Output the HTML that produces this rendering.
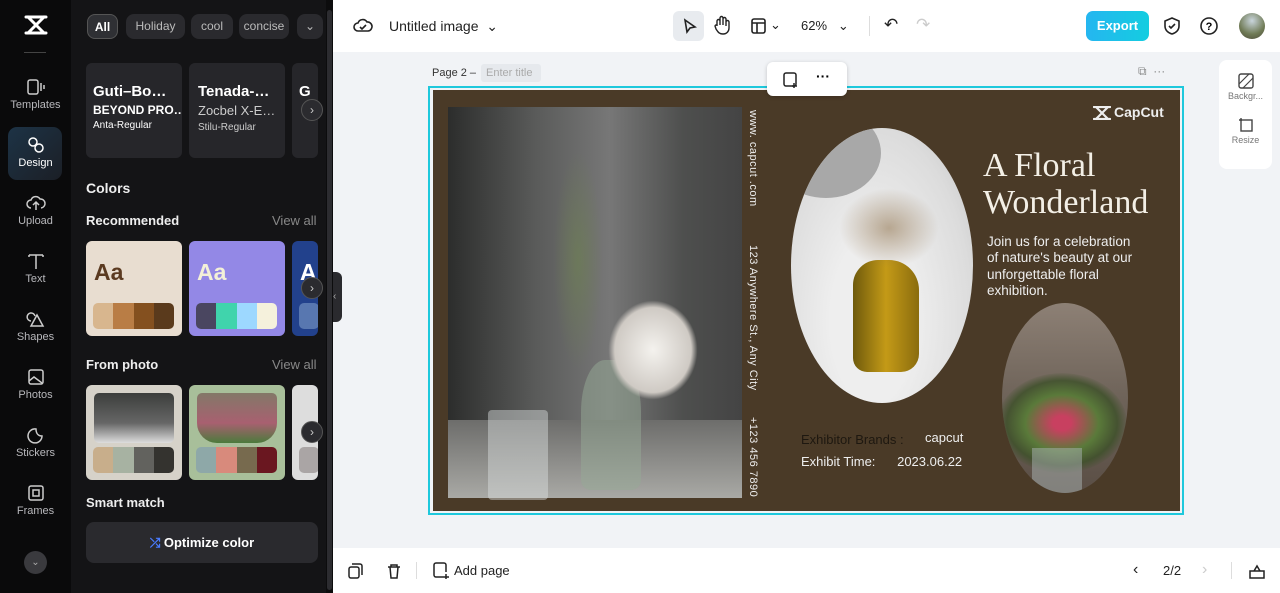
<!DOCTYPE html>
<html><head><style>
*{box-sizing:border-box;margin:0;padding:0}
body{width:1280px;height:593px;overflow:hidden;font-family:"Liberation Sans",sans-serif;background:#f1f3f6;position:relative}
.abs{position:absolute}
.rail{left:0;top:0;width:71px;height:593px;background:#0a0a0b}
.ri{position:absolute;left:0;width:71px;text-align:center;color:#b8b8bc;font-size:11px}
.ri svg{display:block;margin:0 auto 3px}
.panel{left:71px;top:0;width:262px;height:593px;background:#141416;color:#fff}
.chip{position:absolute;top:14px;height:25px;border-radius:8px;background:#2a2a2e;color:#bbb;font-size:12px;line-height:25px;text-align:center}
.card{position:absolute;border-radius:6px;overflow:hidden}
.sw{position:absolute;height:26px;border-radius:5px;overflow:hidden;display:flex}
.sw div{flex:1}
.h{position:absolute;font-size:13px;font-weight:bold;color:#eee}
.va{position:absolute;font-size:13px;color:#888}
.arrow{position:absolute;width:22px;height:22px;border-radius:50%;background:#2b2b2f;border:1px solid #555;color:#ccc;font-size:12px;line-height:20px;text-align:center}
.top{left:333px;top:0;width:947px;height:52px;background:#fff}
.bot{left:333px;top:548px;width:947px;height:45px;background:#fff}
.tx{position:absolute;font-size:13px;color:#222}
.vt{position:absolute;writing-mode:vertical-rl;color:#eee;font-size:11px;letter-spacing:.5px}
</style></head><body>
<div class="abs rail">
<svg class="abs" style="left:24px;top:15px" width="24" height="20"><path d="M2 2h20M2 18h20M4 2l16 16M20 2L4 18" fill="none" stroke="#fff" stroke-width="3" stroke-linejoin="round" stroke-linecap="round"/></svg>
<div style="position:absolute;left:24px;top:52px;width:22px;height:1px;background:#444"></div>
<div class="ri" style="top:78px"><svg width="20" height="18"><rect x="2" y="2" width="10" height="14" rx="2" fill="none" stroke="#ccc" stroke-width="1.5"/><path d="M15 5v8M18 7v4" stroke="#ccc" stroke-width="1.5"/></svg>Templates</div>
<div style="position:absolute;left:8px;top:127px;width:54px;height:53px;border-radius:9px;background:linear-gradient(135deg,#1d3346,#1b1f26)"></div>
<div class="ri" style="top:136px;color:#fff"><svg width="20" height="18"><circle cx="7" cy="6" r="4" fill="none" stroke="#fff" stroke-width="1.5"/><circle cx="13" cy="12" r="4" fill="none" stroke="#fff" stroke-width="1.5"/></svg>Design</div>
<div class="ri" style="top:194px"><svg width="20" height="18"><path d="M5 14a4 4 0 010-8 5 5 0 019-1 4 4 0 011 9M10 8v8M7 11l3-3 3 3" fill="none" stroke="#ccc" stroke-width="1.5"/></svg>Upload</div>
<div class="ri" style="top:252px"><svg width="20" height="18"><path d="M3 3h14M10 3v14M3 3v2M17 3v2" stroke="#ccc" stroke-width="1.5" fill="none"/></svg>Text</div>
<div class="ri" style="top:310px"><svg width="20" height="18"><path d="M9 6a4 4 0 10-4 5M11 5l6 11H5z" fill="none" stroke="#ccc" stroke-width="1.5"/></svg>Shapes</div>
<div class="ri" style="top:368px"><svg width="20" height="18"><rect x="3" y="2" width="14" height="14" rx="2" fill="none" stroke="#ccc" stroke-width="1.5"/><path d="M3 13l5-4 8 6" fill="none" stroke="#ccc" stroke-width="1.5"/></svg>Photos</div>
<div class="ri" style="top:426px"><svg width="20" height="18"><path d="M16 10a7 7 0 11-6-7c0 4 2 7 6 7z" fill="none" stroke="#ccc" stroke-width="1.5"/></svg>Stickers</div>
<div class="ri" style="top:484px"><svg width="20" height="18"><rect x="3" y="2" width="14" height="14" rx="2" fill="none" stroke="#ccc" stroke-width="1.5"/><rect x="7" y="6" width="6" height="6" fill="none" stroke="#ccc" stroke-width="1.5"/></svg>Frames</div>
<div style="position:absolute;left:24px;top:551px;width:23px;height:23px;border-radius:50%;background:#3a3a3e;color:#aaa;font-size:10px;text-align:center;line-height:23px">⌄</div>
</div>
<div class="abs panel">
<div class="chip" style="left:16px;width:31px;background:#2f3034;border:1px solid #555;color:#fff;font-weight:bold">All</div>
<div class="chip" style="left:55px;width:59px">Holiday</div>
<div class="chip" style="left:120px;width:42px">cool</div>
<div class="chip" style="left:168px;width:50px;overflow:hidden">concise</div>
<div class="chip" style="left:226px;width:26px">⌄</div>
<div class="card" style="left:15px;top:63px;width:96px;height:95px;background:#26262a;padding:20px 7px;font-size:15px;font-weight:bold;white-space:nowrap;overflow:hidden">Guti–Bo…<div style="font-size:12px;margin-top:3px">BEYOND PRO…</div><div style="font-size:10px;font-weight:normal;margin-top:3px">Anta-Regular</div></div>
<div class="card" style="left:118px;top:63px;width:96px;height:95px;background:#26262a;padding:20px 9px;font-size:15px;font-weight:bold;white-space:nowrap;overflow:hidden">Tenada-…<div style="font-size:13px;font-weight:normal;margin-top:3px;color:#ccc">Zocbel X-E…</div><div style="font-size:10px;font-weight:normal;margin-top:4px;color:#ccc">Stilu-Regular</div></div>
<div class="card" style="left:221px;top:63px;width:26px;height:95px;background:#26262a;padding:20px 7px;font-size:15px;font-weight:bold">G</div>
<div class="arrow" style="left:230px;top:99px">›</div>
<div class="h" style="left:15px;top:180px;font-size:14px">Colors</div>
<div class="h" style="left:15px;top:213px">Recommended</div><div class="va" style="left:201px;top:213px">View all</div>
<div class="card" style="left:15px;top:241px;width:96px;height:95px;background:#e8ddd0"><div style="position:absolute;left:8px;top:18px;font-size:23px;font-weight:bold;color:#5b3a20">Aa</div><div class="sw" style="left:7px;top:62px;width:81px"><div style="background:#d8b68e"></div><div style="background:#b97d45"></div><div style="background:#84501f"></div><div style="background:#5a3a1c"></div></div></div>
<div class="card" style="left:118px;top:241px;width:96px;height:95px;background:#9388e6"><div style="position:absolute;left:8px;top:18px;font-size:23px;font-weight:bold;color:#f3f0d8">Aa</div><div class="sw" style="left:7px;top:62px;width:81px"><div style="background:#4a4660"></div><div style="background:#40d4ac"></div><div style="background:#9dd8ff"></div><div style="background:#f5f1dc"></div></div></div>
<div class="card" style="left:221px;top:241px;width:26px;height:95px;background:#22418c"><div style="position:absolute;left:8px;top:18px;font-size:23px;font-weight:bold;color:#fff">A</div><div style="position:absolute;left:7px;top:62px;width:20px;height:26px;background:#5877b0;border-radius:5px"></div></div>
<div class="arrow" style="left:230px;top:277px">›</div>
<div class="h" style="left:15px;top:357px">From photo</div><div class="va" style="left:201px;top:357px">View all</div>
<div class="card" style="left:15px;top:385px;width:96px;height:95px;background:#d6d2c9"><div style="position:absolute;left:8px;top:8px;width:80px;height:50px;border-radius:5px;background:linear-gradient(#3c3e3c,#666 60%,#ddd)"></div><div class="sw" style="left:7px;top:62px;width:81px"><div style="background:#c8ae8b"></div><div style="background:#a7b2a2"></div><div style="background:#62625e"></div><div style="background:#34332f"></div></div></div>
<div class="card" style="left:118px;top:385px;width:96px;height:95px;background:#a8bf9a"><div style="position:absolute;left:8px;top:8px;width:80px;height:50px;border-radius:5px 5px 20px 20px;background:linear-gradient(#837868,#a86070 60%,#4c7a3c)"></div><div class="sw" style="left:7px;top:62px;width:81px"><div style="background:#8ea8a8"></div><div style="background:#d88a7c"></div><div style="background:#776a4e"></div><div style="background:#6a1720"></div></div></div>
<div class="card" style="left:221px;top:385px;width:26px;height:95px;background:#ddd"><div style="position:absolute;left:7px;top:62px;width:20px;height:26px;background:#aaa5a5;border-radius:5px"></div></div>
<div class="arrow" style="left:230px;top:421px">›</div>
<div class="h" style="left:15px;top:495px">Smart match</div>
<div style="position:absolute;left:15px;top:522px;width:232px;height:41px;border-radius:8px;background:#2a2a2e;text-align:center;line-height:41px;font-size:13px;font-weight:bold"><span style="color:#4a7cff">⤮</span> Optimize color</div>
<div style="position:absolute;left:255px;top:0;width:7px;height:593px;background:#0c0c0d"></div>
<div style="position:absolute;left:256px;top:10px;width:5px;height:580px;border-radius:3px;background:#2c2c30"></div>
</div>
<div class="abs" style="left:333px;top:272px;width:9px;height:50px;background:#2a2a2e;border-radius:0 6px 6px 0;color:#aaa;font-size:10px;line-height:50px">‹</div>
<div class="abs top">
<svg class="abs" style="left:20px;top:16px" width="20" height="20"><path d="M5 15a4 4 0 010-8 5 5 0 019-1 4 4 0 011 9z" fill="none" stroke="#222" stroke-width="1.6"/><path d="M7 11l2 2 4-4" fill="none" stroke="#222" stroke-width="1.6"/></svg>
<div class="tx" style="left:56px;top:18px;font-size:14px">Untitled image &nbsp;⌄</div>
<div class="abs" style="left:340px;top:11px;width:31px;height:30px;border-radius:6px;background:#e8ebef"></div>
<svg class="abs" style="left:347px;top:17px" width="18" height="18"><path d="M5 3l10 7-5 1-3 4z" fill="none" stroke="#222" stroke-width="1.6"/></svg>
<svg class="abs" style="left:380px;top:15px" width="18" height="20"><path d="M4 11V6a1.5 1.5 0 013 0v4V3a1.5 1.5 0 013 0v7V4a1.5 1.5 0 013 0v7V7a1.5 1.5 0 013 0v6c0 3-2 6-6 6s-5-2-7-5l-1-3a1.5 1.5 0 012-1z" fill="none" stroke="#222" stroke-width="1.4"/></svg>
<svg class="abs" style="left:417px;top:17px" width="18" height="18"><rect x="2" y="2" width="13" height="14" rx="2" fill="none" stroke="#222" stroke-width="1.6"/><path d="M2 6h13M7 6v10" stroke="#222" stroke-width="1.6"/></svg>
<div class="tx" style="left:437px;top:17px">⌄</div>
<div class="tx" style="left:468px;top:18px">62% &nbsp;&nbsp;⌄</div>
<div class="abs" style="left:536px;top:16px;width:1px;height:20px;background:#ddd"></div>
<div class="tx" style="left:551px;top:15px;font-size:17px">↶</div>
<div class="tx" style="left:583px;top:15px;font-size:17px;color:#ccc">↷</div>
<div class="abs" style="left:753px;top:11px;width:63px;height:30px;border-radius:7px;background:linear-gradient(90deg,#25b6f0,#14cde0);color:#fff;font-weight:bold;font-size:13px;text-align:center;line-height:30px">Export</div>
<svg class="abs" style="left:829px;top:16px" width="20" height="20"><path d="M10 2l7 3v5c0 4-3 7-7 8-4-1-7-4-7-8V5z" fill="none" stroke="#222" stroke-width="1.6"/><path d="M7 10l2 2 4-4" fill="none" stroke="#222" stroke-width="1.6"/></svg>
<svg class="abs" style="left:866px;top:16px" width="20" height="20"><circle cx="10" cy="10" r="8" fill="none" stroke="#222" stroke-width="1.6"/><text x="10" y="14" font-size="11" text-anchor="middle" font-family="Liberation Sans" font-weight="bold">?</text></svg>
<div class="abs" style="left:906px;top:13px;width:26px;height:26px;border-radius:50%;background:radial-gradient(circle at 50% 30%,#c9d5dc,#6f7a55 60%,#4d4a3a)"></div>
</div>
<div class="tx" style="left:432px;top:67px;font-size:11px;color:#333">Page 2 –</div>
<div class="abs" style="left:481px;top:64px;width:60px;height:18px;border-radius:3px;background:#e6e9ed;color:#aaa;font-size:11px;line-height:18px;padding-left:5px">Enter title</div>
<div class="tx" style="left:1138px;top:64px;font-size:12px;color:#888">⧉ &nbsp;···</div>
<div class="abs" style="left:1219px;top:60px;width:53px;height:109px;border-radius:8px;background:#fff;color:#777;font-size:9px;text-align:center">
<svg style="display:block;margin:13px auto 2px" width="16" height="16"><rect x="1" y="1" width="14" height="14" rx="2" fill="none" stroke="#444" stroke-width="1.4"/><path d="M1 11L11 1M5 15L15 5" stroke="#444" stroke-width="1.2"/></svg>Backgr...
<svg style="display:block;margin:16px auto 2px" width="16" height="16"><rect x="3" y="3" width="11" height="11" fill="none" stroke="#444" stroke-width="1.4"/><path d="M1 3h3M3 1v3" stroke="#444" stroke-width="1.4"/></svg>Resize</div>
<!-- canvas -->
<div class="abs" style="left:428px;top:86px;width:756px;height:429px;border:2px solid #1ec8dc"></div>
<div class="abs" style="left:433px;top:90px;width:747px;height:421px;background:#4a3a27;overflow:hidden">
<div class="abs" style="left:15px;top:17px;width:294px;height:391px;background:linear-gradient(90deg,#2c2d2c,#5a5b5a 30%,#777 55%,#4e4f4e 80%,#444)"></div>
<div class="abs" style="left:15px;top:330px;width:294px;height:78px;background:linear-gradient(#6d6d6b,#a9a9a5)"></div>
<div class="abs" style="left:55px;top:320px;width:60px;height:90px;border-radius:4px;background:rgba(220,225,225,.45)"></div>
<div class="abs" style="left:148px;top:270px;width:60px;height:130px;border-radius:40% 40% 10px 10px;background:rgba(150,170,150,.5)"></div>
<div class="abs" style="left:175px;top:210px;width:90px;height:100px;border-radius:50%;background:radial-gradient(#f4f2ee,#cfcac4 60%,transparent 70%)"></div>
<div class="abs" style="left:120px;top:60px;width:50px;height:220px;background:radial-gradient(ellipse,rgba(110,130,80,.6),transparent 70%)"></div>
<div class="vt" style="left:314px;top:20px">www. capcut .com</div>
<div class="vt" style="left:314px;top:155px">123 Anywhere St., Any City</div>
<div class="vt" style="left:314px;top:327px">+123 456 7890</div>
<div class="abs" style="left:358px;top:38px;width:182px;height:275px;border-radius:50%;background:radial-gradient(ellipse at 45% 70%,#eee 30%,#dcdcdc 70%,#c0c0c0);overflow:hidden"><div class="abs" style="left:-20px;top:-20px;width:110px;height:90px;border-radius:50%;background:#a8a8a8"></div><div class="abs" style="left:62px;top:132px;width:66px;height:112px;border-radius:25px 30px 18px 14px;background:linear-gradient(90deg,#6e5a0c,#c49a17 50%,#8a6c0e)"></div><div class="abs" style="left:48px;top:60px;width:100px;height:80px;border-radius:50%;background:radial-gradient(rgba(140,110,70,.55),transparent 70%)"></div></div>
<div class="abs" style="left:569px;top:213px;width:126px;height:190px;border-radius:50%;background:linear-gradient(#8d8075,#6e6359 50%,#5a4e45);overflow:hidden"><div class="abs" style="left:-5px;top:70px;width:130px;height:100px;border-radius:50%;background:radial-gradient(#c84060 10%,#5a7a3a 40%,rgba(60,80,40,.8) 60%,transparent 72%)"></div><div class="abs" style="left:30px;top:145px;width:50px;height:45px;background:rgba(170,180,180,.5)"></div></div>
<svg class="abs" style="left:660px;top:16px" width="18" height="14"><path d="M1 1h16M1 13h16M3 1l12 12M15 1L3 13" fill="none" stroke="#eee" stroke-width="2.2" stroke-linecap="round"/></svg>
<div class="abs" style="left:681px;top:14px;color:#eee;font-size:14px;font-weight:bold">CapCut</div>
<div class="abs" style="left:550px;top:57px;color:#f3efe6;font-family:'Liberation Serif',serif;font-size:34px;line-height:37px">A Floral<br>Wonderland</div>
<div class="abs" style="left:554px;top:144px;color:#eee;font-size:13.5px;line-height:16.3px">Join us for a celebration<br>of nature's beauty at our<br>unforgettable floral<br>exhibition.</div>
<div class="abs" style="left:368px;top:342px;color:#1e1810;font-size:13px">Exhibitor Brands :</div>
<div class="abs" style="left:492px;top:340px;color:#eee;font-size:13px">capcut</div>
<div class="abs" style="left:368px;top:364px;color:#eee;font-size:13px">Exhibit Time: &nbsp;&nbsp;&nbsp;&nbsp;&nbsp;2023.06.22</div>
</div>
<div class="abs" style="left:767px;top:62px;width:80px;height:34px;border-radius:6px;background:#fff;box-shadow:0 1px 4px rgba(0,0,0,.2)"><svg class="abs" style="left:15px;top:9px" width="18" height="18"><rect x="2" y="2" width="12" height="13" rx="2" fill="none" stroke="#222" stroke-width="1.5"/><path d="M12 12v5M10 15h5" stroke="#222" stroke-width="1.5"/></svg><div class="abs" style="left:49px;top:6px;font-size:14px;font-weight:bold">···</div></div>
<div class="abs bot">
<svg class="abs" style="left:15px;top:15px" width="16" height="16"><rect x="1" y="4" width="10" height="11" rx="2" fill="none" stroke="#222" stroke-width="1.5"/><path d="M4 1h8a2 2 0 012 2v9" fill="none" stroke="#222" stroke-width="1.5"/></svg>
<svg class="abs" style="left:53px;top:15px" width="16" height="16"><path d="M2 4h12M5 4V2h6v2M4 4l1 11h6l1-11" fill="none" stroke="#222" stroke-width="1.5"/></svg>
<div class="abs" style="left:83px;top:14px;width:1px;height:17px;background:#ddd"></div>
<svg class="abs" style="left:99px;top:14px" width="18" height="18"><path d="M12 15H4a2 2 0 01-2-2V3a2 2 0 012-2h8a2 2 0 012 2v7M14 12v5M12 15h5" fill="none" stroke="#222" stroke-width="1.5"/></svg>
<div class="tx" style="left:121px;top:15px">Add page</div>
<div class="tx" style="left:800px;top:13px;font-size:16px">‹</div>
<div class="tx" style="left:830px;top:15px">2/2</div>
<div class="tx" style="left:869px;top:13px;font-size:16px;color:#ccc">›</div>
<div class="abs" style="left:898px;top:14px;width:1px;height:17px;background:#ddd"></div>
<svg class="abs" style="left:915px;top:14px" width="18" height="18"><path d="M2 9h14v7H2zM6 9l3-5 3 5" fill="none" stroke="#222" stroke-width="1.5"/></svg>
</div>
</body></html>
